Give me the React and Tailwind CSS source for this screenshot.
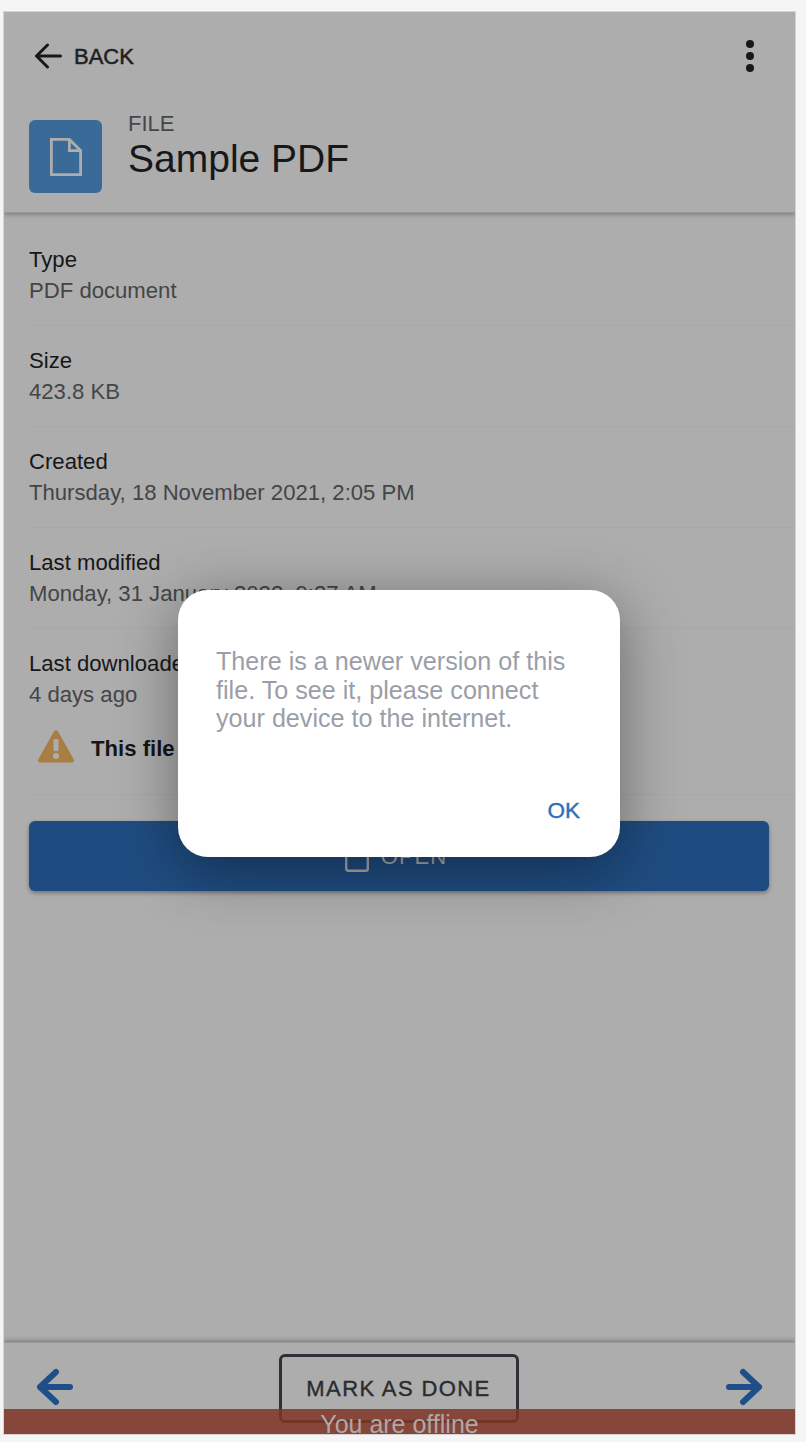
const font = { fontFamily: '"Liberation Sans", Arial, sans-serif' };

function Row({ label, value, children }) {
  return (
    <div className={`ml-[25px] border-b border-[#a8a8a8] pt-[21px] ${children ? "" : "h-[101px]"}`}>
      <div className="text-[22.13px] leading-7 text-[#161719]">{label}</div>
      <div className="mt-[3px] text-[22.13px] leading-7 text-[#444547]">{value}</div>
      {children}
    </div>
  );
}

function Arrow({ dir, className }) {
  return (
    <svg viewBox="0 0 38 38" className={className} fill="none" stroke="#1f4f88" strokeWidth="6" strokeLinecap="round" strokeLinejoin="round">
      {dir === "left" ? <path d="M34 19H4M20 4 4 19l16 15" /> : <path d="M4 19h30M18 4l16 15-16 15" />}
    </svg>
  );
}

export default function App() {
  return (
    <div className="h-[1442px] w-[806px] overflow-hidden bg-[#f5f5f5] pt-3 pl-1" style={font}>
      <div className="relative flex h-[1422px] w-[791px] flex-col overflow-hidden bg-[#adadad] shadow-[0_0_0_1px_#d4d4d4]">
        <header className="h-[201px] shrink-0 border-b border-[#999999] shadow-[0_2px_4px_rgba(0,0,0,0.25)]">
          <div className="flex items-center justify-between pt-[28px] pr-[41px] pl-[30px]">
            <div className="flex items-center gap-[12px]">
              <svg viewBox="0 0 28 26" className="h-[26px] w-[28px]" fill="none" stroke="#17181a" strokeWidth="3" strokeLinecap="round" strokeLinejoin="round">
                <path d="M26.500 13H2.500M13.500 2 2.500 13l11 11" />
              </svg>
              <span className="mt-[1px] text-[22px] leading-7 font-medium text-[#202124] [-webkit-text-stroke:0.5px_#202124]">BACK</span>
            </div>
            <svg viewBox="0 0 8 32" className="h-8 w-2" fill="#17181a">
              <circle cx="4" cy="4" r="4" />
              <circle cx="4" cy="16" r="4" />
              <circle cx="4" cy="28" r="4" />
            </svg>
          </div>
          <div className="flex items-center gap-[26px] pt-[48px] pl-[25px]">
            <div className="flex h-[73px] w-[73px] items-center justify-center rounded-[6px] bg-[#3a6a98]">
              <svg viewBox="0 0 32 38" className="h-[38px] w-8" fill="none" stroke="#adadad" strokeWidth="2.800" strokeLinejoin="miter">
                <path d="M1.400 1.400h18l11.200 11.200v24H1.400z" />
                <path d="M19.400 1.400v11.200h11.200" />
              </svg>
            </div>
            <div className="-mt-[20px]">
              <div className="text-[22px] leading-6 text-[#454648]">FILE</div>
              <div className="mt-[1px] text-[39px] leading-[44px] text-[#17181a]">Sample PDF</div>
            </div>
          </div>
        </header>

        <main className="flex-1 pt-[12px]">
          <Row label="Type" value="PDF document" />
          <Row label="Size" value="423.8 KB" />
          <Row label="Created" value="Thursday, 18 November 2021, 2:05 PM" />
          <Row label="Last modified" value="Monday, 31 January 2022, 9:27 AM" />
          <Row label="Last downloaded" value="4 days ago">
            <div className="mt-[20px] flex items-center gap-[16px] pb-[31px] pl-2">
              <svg viewBox="0 0 38 34" className="h-[34px] w-[38px] shrink-0">
                <path d="M19 1.500c1 0 1.700.5 2.300 1.500l15.500 27.500c.8 1.500 0 3-1.800 3H3c-1.800 0-2.600-1.500-1.800-3L16.700 3c.6-1 1.300-1.500 2.300-1.500z" fill="#a87e45" />
                <rect x="16.500" y="10" width="5" height="12" rx="1" fill="#adadad" />
                <circle cx="19" cy="27" r="3" fill="#adadad" />
              </svg>
              <span className="pt-[5px] text-[22.13px] leading-7 font-bold text-[#141517]">This file has changed since you last opened it.</span>
            </div>
          </Row>
          <div className="px-[25px] pt-[26px]">
            <button className="flex h-[70px] w-[740px] items-center justify-center gap-3 rounded-[6px] bg-[#1f4c80] pr-[6px] shadow-[0_2px_4px_rgba(0,0,0,0.35)]">
              <svg viewBox="0 0 24 36" className="-mt-[4px] h-9 w-6" fill="none" stroke="#a9a9a9" strokeWidth="2.400">
                <rect x="1.200" y="1.200" width="21.600" height="33.600" rx="2" />
              </svg>
              <span className="text-[22px] tracking-[1px] text-[#a9a9a9]">OPEN</span>
            </button>
          </div>
        </main>

        <footer className="relative flex h-[92px] shrink-0 items-start justify-between border-t border-[#999999] px-[32px] pt-[11px] shadow-[0_-2px_4px_rgba(0,0,0,0.25)]">
          <Arrow dir="left" className="mt-[14px] h-[38px] w-[38px]" />
          <button className="-ml-[2px] flex h-[69px] w-[240px] items-center justify-center rounded-[6px] border-[3px] border-[#2d3036]">
            <span className="text-[22px] font-medium tracking-[1.4px] text-[#2a2c30] [-webkit-text-stroke:0.4px_#2a2c30]">MARK AS DONE</span>
          </button>
          <Arrow dir="right" className="mt-[14px] h-[38px] w-[38px]" />
        </footer>

        <div className="absolute right-0 bottom-0 left-0 h-[25px] overflow-hidden bg-[#803426]/[0.85] text-center text-[25px] leading-[30px] text-[#b0a8a5]">
          You are offline
        </div>

        <div className="absolute top-[578px] left-[174px] flex h-[267px] w-[442px] flex-col rounded-[30px] bg-white/[0.995] shadow-[0_12px_60px_rgba(0,0,0,0.4)]">
          <p className="px-[38px] pt-[57px] text-[25.150px] leading-[28.500px] text-[#9a9ea8]">
            There is a newer version of this file. To see it, please connect your device to the internet.
          </p>
          <button className="mt-auto mr-[40px] mb-[32px] self-end text-[22.500px] leading-7 font-medium text-[#2f6fbb] [-webkit-text-stroke:0.4px_#2f6fbb]">OK</button>
        </div>
      </div>
    </div>
  );
}
